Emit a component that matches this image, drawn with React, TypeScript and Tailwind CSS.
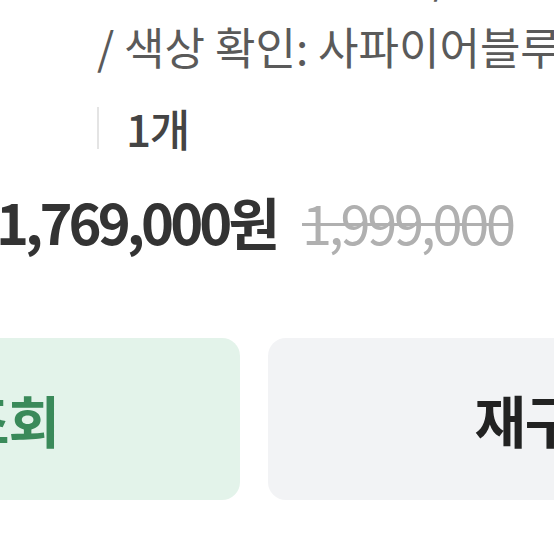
import React from 'react';

const font = { fontFamily: '"Noto Sans CJK KR", "Noto Sans", sans-serif' };

const App: React.FC = () => {
  return (
    <div className="w-[554px] h-[554px] overflow-hidden bg-white" style={font}>
      <div className="w-[1200px] -ml-[324px]">
        <div className="pl-[421px] -mt-[60px] flex flex-col">
          <p className="text-[44px] leading-[70px] text-[#5a5a5a] whitespace-nowrap">
            저장 용량: 256GB / 모델명: 갤럭시 Z
          </p>
          <p className="text-[44px] leading-[72px] text-[#5a5a5a] whitespace-nowrap">
            / 색상 확인: 사파이어블루
          </p>
          <div className="flex items-center gap-[27px] h-[92px]">
            <span className="w-[2px] h-[42px] bg-[#e4e4e4]" />
            <span className="text-[44px] leading-none font-medium tracking-[-0.03em] text-[#444]">1개</span>
          </div>
        </div>
        <div className="pl-[320px] mt-[19px] flex items-baseline gap-[26px] whitespace-nowrap">
          <span className="text-[56px] leading-none font-bold tracking-[-0.07em] text-[#333]">1,769,000원</span>
          <span className="text-[54px] leading-none tracking-[-0.06em] text-[#b0b0b0] line-through decoration-[3px]">1,999,000</span>
        </div>
        <div className="mt-[89px] flex gap-[28px]">
          <button className="w-[564px] h-[162px] rounded-[18px] bg-[#e3f3ea] text-[#3a8a5a] text-[56px] font-bold tracking-[-0.02em]">
            배송조회
          </button>
          <button className="w-[564px] h-[162px] rounded-[18px] bg-[#f2f3f5] text-[#222] text-[56px] font-bold tracking-[-0.02em]">
            재구매
          </button>
        </div>
      </div>
    </div>
  );
};

export default App;
